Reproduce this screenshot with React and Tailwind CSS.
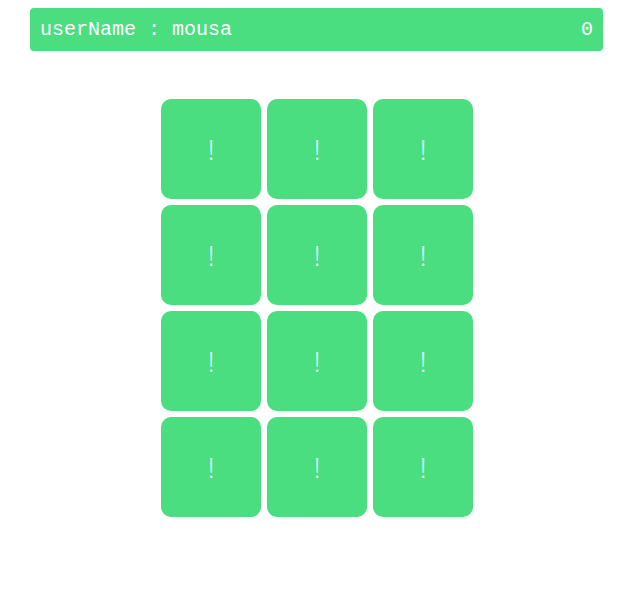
export default function App() {
  const cards = Array.from({ length: 12 });

  return (
    <div className="min-h-screen bg-white pt-2">
      <div className="ml-[30px] flex h-[43px] w-[573px] items-center justify-between rounded bg-[#4ade80] px-[10px] font-['Liberation_Mono',monospace] text-[20px] text-white">
        <span>userName : mousa</span>
        <span>0</span>
      </div>

      <div className="mt-12 flex justify-center pl-[3px]">
        <div className="grid grid-cols-[repeat(3,100px)] gap-[6px]">
          {cards.map((_, i) => (
            <div
              key={i}
              className="flex h-[100px] w-[100px] items-center justify-center rounded-[10px] bg-[#4ade80] font-['Open_Sans',sans-serif] text-[28px] font-light text-white"
            >
              !
            </div>
          ))}
        </div>
      </div>
    </div>
  );
}
